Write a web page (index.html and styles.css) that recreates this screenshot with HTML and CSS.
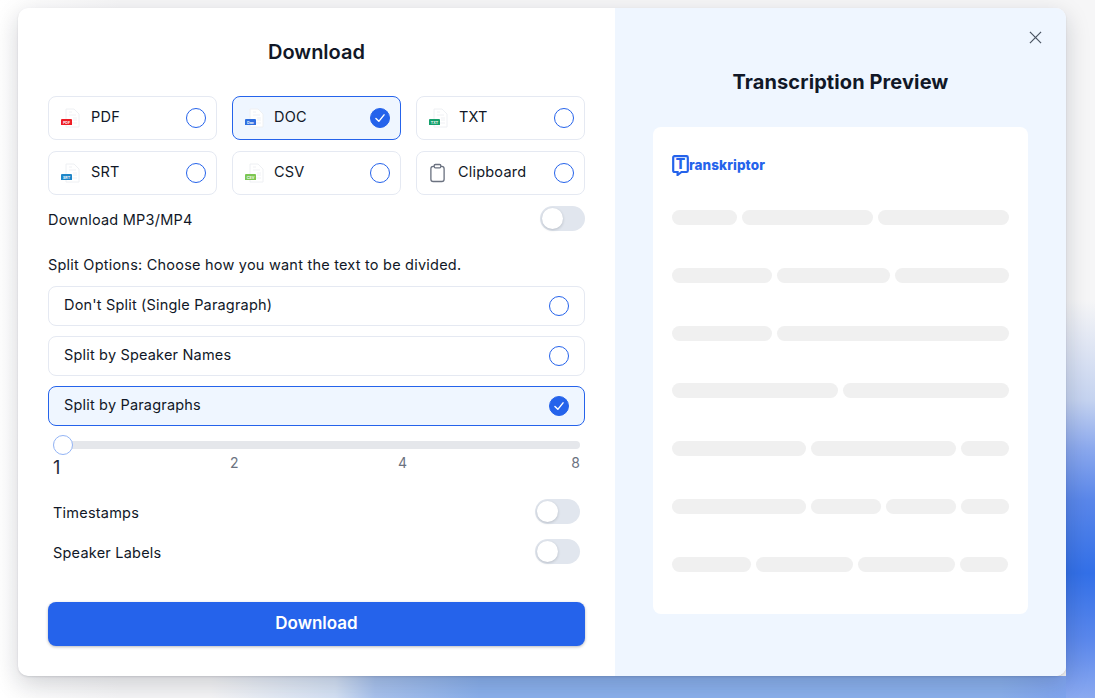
FILE: index.html
```html
<!DOCTYPE html>
<html lang="en">
<head>
<meta charset="utf-8">
<title>Download</title>
<link rel="stylesheet" href="styles.css">
</head>
<body>
<main class="modal">
  <section class="left">
    <h1 class="title">Download</h1>
    <div class="formats">
      <label class="fmt"><svg class="file" viewBox="0 0 20 20"><path class="sheet" d="M5 1h8l5 5v13H5z"/><path class="lines" d="M8 4h3M8 7h7M12 10h4M12 12h4M8 15h8"/></svg><svg class="tag-svg" viewBox="0 0 12 7"><rect width="12" height="7" rx="1" fill="#ee1c25"/><text x="6" y="5" class="tag">PDF</text></svg><span class="fmt-name">PDF</span><span class="radio"></span></label>
      <label class="fmt on"><svg class="file" viewBox="0 0 20 20"><path class="sheet" d="M5 1h8l5 5v13H5z"/><path class="lines" d="M8 4h3M8 7h7M12 10h4M12 12h4M8 15h8"/></svg><svg class="tag-svg" viewBox="0 0 12 7"><rect width="12" height="7" rx="1" fill="#2f6fe0"/><text x="6" y="5" class="tag">Doc</text></svg><span class="fmt-name">DOC</span><span class="radio checked"><svg viewBox="0 0 20 20"><path d="M5.5 10.5l3.2 3.2 5.8-7.2"/></svg></span></label>
      <label class="fmt"><svg class="file" viewBox="0 0 20 20"><path class="sheet" d="M5 1h8l5 5v13H5z"/><path class="lines" d="M8 4h3M8 7h7M12 10h4M12 12h4M8 15h8"/></svg><svg class="tag-svg" viewBox="0 0 12 7"><rect width="12" height="7" rx="1" fill="#16a06c"/><text x="6" y="5" class="tag">TXT</text></svg><span class="fmt-name">TXT</span><span class="radio"></span></label>
      <label class="fmt"><svg class="file" viewBox="0 0 20 20"><path class="sheet" d="M5 1h8l5 5v13H5z"/><path class="lines" d="M8 4h3M8 7h7M12 10h4M12 12h4M8 15h8"/></svg><svg class="tag-svg" viewBox="0 0 12 7"><rect width="12" height="7" rx="1" fill="#1f86c8"/><text x="6" y="5" class="tag">SRT</text></svg><span class="fmt-name">SRT</span><span class="radio"></span></label>
      <label class="fmt"><svg class="file" viewBox="0 0 20 20"><path class="sheet" d="M5 1h8l5 5v13H5z"/><path class="lines" d="M8 4h3M8 7h7M12 10h4M12 12h4M8 15h8"/></svg><svg class="tag-svg" viewBox="0 0 12 7"><rect width="12" height="7" rx="1" fill="#7cc653"/><text x="6" y="5" class="tag">CSV</text></svg><span class="fmt-name">CSV</span><span class="radio"></span></label>
      <label class="fmt"><svg class="clip" viewBox="0 0 18 20"><rect x="2" y="3" width="14" height="16" rx="2.5"/><rect x="5.5" y="1" width="7" height="3.6" rx="1.2"/></svg><span class="fmt-name clip-name">Clipboard</span><span class="radio"></span></label>
    </div>
    <div class="toggle-row mp">
      <span class="row-text">Download MP3/MP4</span><span class="switch"></span>
    </div>
    <p class="split-label">Split Options: Choose how you want the text to be divided.</p>
    <div class="splits">
      <label class="split"><span class="split-text">Don't Split (Single Paragraph)</span><span class="radio"></span></label>
      <label class="split"><span class="split-text">Split by Speaker Names</span><span class="radio"></span></label>
      <label class="split on"><span class="split-text">Split by Paragraphs</span><span class="radio checked"><svg viewBox="0 0 20 20"><path d="M5.5 10.5l3.2 3.2 5.8-7.2"/></svg></span></label>
    </div>
    <div class="slider">
      <div class="track"><span class="thumb"></span></div>
      <div class="ticks"><span class="tick first">1</span><span class="tick t2">2</span><span class="tick t4">4</span><span class="tick t8">8</span></div>
    </div>
    <div class="toggle-row inset ts"><span class="row-text">Timestamps</span><span class="switch"></span></div>
    <div class="toggle-row inset sl"><span class="row-text">Speaker Labels</span><span class="switch"></span></div>
    <button class="download" type="button">Download</button>
  </section>
  <section class="right">
    <button class="close" type="button" aria-label="Close"><svg viewBox="0 0 14 14"><path d="M1 1l12 12M13 1L1 13"/></svg></button>
    <h2 class="preview-title">Transcription Preview</h2>
    <div class="sheet-card">
      <div class="logo"><svg class="logo-mark" viewBox="0 0 17 21"><path class="bubble" d="M2.5 1.200h12a1.300 1.300 0 0 1 1.300 1.300v13.200a1.300 1.300 0 0 1-1.300 1.300H9.500L5.600 20v-3H2.500a1.300 1.300 0 0 1-1.300-1.300V2.500a1.300 1.300 0 0 1 1.300-1.300z"/><text x="8.500" y="14" class="logo-t">T</text></svg><span class="logo-text">ranskriptor</span></div>
      <div class="skeleton">
        <div class="bars"><i class="w65"></i><i class="w131"></i><i class="w131"></i></div>
        <div class="bars"><i class="w100"></i><i class="w113"></i><i class="w114"></i></div>
        <div class="bars"><i class="w100"></i><i class="w232"></i></div>
        <div class="bars"><i class="w166"></i><i class="w166"></i></div>
        <div class="bars"><i class="w134"></i><i class="w145"></i><i class="w48"></i></div>
        <div class="bars"><i class="w134"></i><i class="w70"></i><i class="w70"></i><i class="w48"></i></div>
        <div class="bars"><i class="w79"></i><i class="w97"></i><i class="w97"></i><i class="w48"></i></div>
      </div>
    </div>
  </section>
</main>
</body>
</html>
```

FILE: styles.css
```css
* { box-sizing: border-box; }
html, body { height: 100%; }
body {
  margin: 0;
  overflow: hidden;
  font-family: Inter, "Liberation Sans", sans-serif;
  color: #111827;
  background-color: #f6f6f7;
  background-image:
    linear-gradient(to bottom, rgba(51,112,232,0) 300px, #c5d3f0 400px, #8aa8ee 450px, #5a87ea 500px, #3370e8 573px, #5b88ec 640px, #8aa9f0 698px),
    linear-gradient(to right, rgba(138,176,236,0) 210px, #d5e2f5 335px, #a9c3ee 375px, #8ab0ec 480px, #8ab0ec 1000px, #7b9ff0 1095px),
    linear-gradient(to right, #ffffff, #f6f6f7 120px);
  background-size: 29px 100%, 100% 22px, 100% 100%;
  background-position: right top, left bottom, left top;
  background-repeat: no-repeat;
  padding: 8px 0 0 18px;
}
.modal {
  width: 1048px;
  height: 668px;
  display: flex;
  border-radius: 10px;
  overflow: hidden;
  background: #fff;
  box-shadow: 0 8px 24px rgba(17, 24, 39, .18), 0 1px 2px rgba(17, 24, 39, .12);
}
.left {
  width: 597px;
  padding: 0 30px;
  display: flex;
  flex-direction: column;
}
.title {
  margin: 32px 0 0;
  font-size: 20px;
  line-height: 24px;
  font-weight: 600;
  text-align: center;
}
.formats {
  margin-top: 32px;
  display: grid;
  grid-template-columns: repeat(3, 169px);
  grid-auto-rows: 44px;
  column-gap: 15px;
  row-gap: 11px;
}
.fmt {
  display: flex;
  align-items: center;
  padding: 0 10px 0 12px;
  border: 1px solid #e5e9f2;
  border-radius: 8px;
  background: #fff;
}
.fmt.on, .split.on {
  background: #eff6ff;
  border-color: #2563eb;
}
.file { width: 20px; height: 20px; flex: none; }
.sheet { fill: #fff; stroke: #eef0f3; stroke-width: 1; }
.lines { stroke: #f0f1f4; stroke-width: 1; fill: none; }
.tag-svg { width: 11px; height: 6.500px; flex: none; margin: 8px 0 0 -20px; }
.tag { font: 600 4px Inter, sans-serif; fill: #fff; text-anchor: middle; }
.fmt-name {
  margin-left: 19px;
  font-size: 14.500px;
  font-weight: 400;
  letter-spacing: .2px;
  flex: 1;
  margin-top: -3px;
}
.fmt:nth-child(3n+2) .fmt-name { margin-left: 18px; }
.clip { width: 17px; height: 20px; flex: none; margin-right: 0; fill: #fff; stroke: #6b7280; stroke-width: 1.400; }
.fmt-name.clip-name { margin-left: 12px; }
.radio {
  width: 20px;
  height: 20px;
  flex: none;
  border-radius: 50%;
  border: 1px solid #2563eb;
  background: #fff;
  display: flex;
}
.radio.checked { background: #2563eb; }
.radio svg { width: 100%; height: 100%; fill: none; stroke: #fff; stroke-width: 1.600; stroke-linecap: round; stroke-linejoin: round; }
.toggle-row {
  display: flex;
  align-items: center;
  justify-content: space-between;
  font-size: 14.500px;
  letter-spacing: .22px;
}
.mp { margin-top: 11px; height: 25px; }
.row-text { padding-top: 2px; }
.switch {
  width: 45px;
  height: 25px;
  border-radius: 13px;
  background: #e1e6ee;
  display: flex;
  align-items: center;
  padding-left: 2px;
}
.switch::before {
  content: "";
  width: 21px;
  height: 21px;
  border-radius: 50%;
  background: #fff;
  box-shadow: 0 1px 3px rgba(17, 24, 39, .2);
}
.split-label { margin: 25px 0 0; font-size: 14.500px; line-height: 18px; letter-spacing: .22px; }
.splits { margin-top: 12px; display: flex; flex-direction: column; gap: 10px; }
.split {
  height: 40px;
  display: flex;
  align-items: center;
  justify-content: space-between;
  padding: 0 15px;
  border: 1px solid #e5e9f2;
  border-radius: 8px;
  font-size: 14.500px;
  letter-spacing: .18px;
}
.split-text { margin-top: -3px; }
.slider { margin: 15px 5px 0; position: relative; }
.track { height: 8px; border-radius: 4px; background: #e5e7eb; position: relative; }
.thumb {
  position: absolute;
  left: 0;
  top: -6px;
  width: 20px;
  height: 20px;
  border-radius: 50%;
  background: #fff;
  border: 1px solid #93b4f5;
}
.ticks { display: flex; height: 30px; position: relative; }
.tick { position: absolute; font-size: 14px; color: #6b7280; top: 5px; line-height: 18px; }
.tick.first { left: 0; top: 9px; font-size: 18px; color: #1f2937; line-height: 20px; }
.t2 { left: 177px; }
.t4 { left: 345px; }
.t8 { right: 0; }
.inset { margin-left: 5px; margin-right: 5px; }
.ts { margin-top: 20px; height: 25px; }
.sl { margin-top: 15px; height: 25px; }
.download {
  margin-top: 38px;
  height: 44px;
  border: 0;
  border-radius: 8px;
  padding: 0 0 3px;
  background: #2563eb;
  color: #fff;
  font: 600 17px Inter, sans-serif;
  box-shadow: 0 1px 3px rgba(17, 24, 39, .3);
}
.right {
  flex: 1;
  background: #eff6ff;
  padding-left: 38px;
  position: relative;
}
.close {
  position: absolute;
  top: 23px;
  right: 24px;
  width: 13px;
  height: 13px;
  padding: 0;
  border: 0;
  background: none;
  display: flex;
}
.close svg { width: 100%; height: 100%; stroke: #4b5563; stroke-width: 1.300; fill: none; }
.preview-title {
  margin: 62px 0 0;
  width: 375px;
  font-size: 20px;
  line-height: 24px;
  font-weight: 700;
  letter-spacing: .1px;
  text-align: center;
}
.sheet-card {
  margin-top: 33px;
  width: 375px;
  height: 487px;
  background: #fff;
  border-radius: 8px;
  padding: 28px 19px 0;
}
.logo { display: flex; align-items: center; height: 21px; }
.logo-mark { width: 17px; height: 21px; flex: none; }
.bubble { fill: #fff; stroke: #2563eb; stroke-width: 2.200; }
.logo-t { font: 800 14px Inter, sans-serif; fill: #2563eb; text-anchor: middle; }
.logo-text { font-size: 13.500px; font-weight: 800; color: #2563eb; letter-spacing: .1px; margin-top: -2px; }
.skeleton { margin-top: 34px; display: flex; flex-direction: column; gap: 42.830px; }
.bars { display: flex; gap: 5px; height: 15px; }
.bars i { display: block; height: 15px; border-radius: 8px; background: #f0f0f0; }
.w48 { width: 48px; }
.w65 { width: 65px; }
.w70 { width: 70px; }
.w79 { width: 79px; }
.w97 { width: 97px; }
.w100 { width: 100px; }
.w113 { width: 113px; }
.w114 { width: 114px; }
.w131 { width: 131px; }
.w134 { width: 134px; }
.w145 { width: 145px; }
.w166 { width: 166px; }
.w232 { width: 232px; }
```
